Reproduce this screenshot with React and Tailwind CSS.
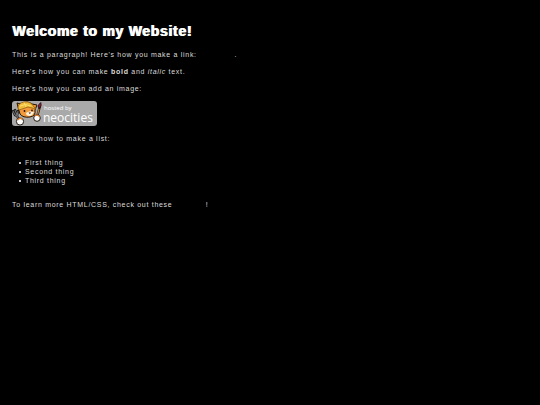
import React from 'react';

const things = ['First thing', 'Second thing', 'Third thing'];

function NeocitiesBadge() {
  return (
    <svg width="85" height="25" viewBox="0 0 85 25" role="img" aria-label="Hosted by Neocities">
      <rect x="0" y="0" width="85" height="25" rx="3" fill="#a9a9a9" />

      {/* fork */}
      <path d="M1 10 L3 14 L5 15 L8 21 M3 9 L5 14 M6 10 L5 15" fill="none" stroke="#1c1c1c" strokeWidth="2.4" strokeLinecap="round" />
      <path d="M1 10 L3 14 L5 15 L8 21 M3 9 L5 14 M6 10 L5 15" fill="none" stroke="#858585" strokeWidth="0.9" />

      {/* brush */}
      <path d="M28 5 L25 16" stroke="#2a1a12" strokeWidth="2.4" strokeLinecap="round" />
      <path d="M27 8 L25 16" stroke="#c08a45" strokeWidth="1.2" />
      <path d="M28.8 1.5 Q30 4 28 7 L26 6 Q26.5 3 28.8 1.5Z" fill="#8c1f35" stroke="#2b1016" strokeWidth="0.8" />

      {/* head */}
      <path d="M6 6 L5 2 L9 3 Q15 -1 20 3 L25 4 L23 9 Q24 15 18 16 Q11 17 8 13Z" fill="#f09a3c" stroke="#241505" strokeWidth="1" strokeLinejoin="round" />
      <path d="M6 7 Q6 2 12 1 Q19 0 22 6 L24 8 L16 6 L7 9Z" fill="#f0bc3a" stroke="#8a540f" strokeWidth="0.7" />
      <path d="M8 5 Q13 2 19 5 M12 1.5 L14 6" fill="none" stroke="#fbe06c" strokeWidth="1" />
      <path d="M14 12 Q18 9 22 11 Q21 14 18 15 Q14 15 14 12Z" fill="#fff1da" />
      <circle cx="12.5" cy="10" r="0.9" fill="#21150d" />
      <circle cx="20" cy="9.5" r="0.9" fill="#21150d" />
      <path d="M16.5 11.5 H19 L17.8 13Z" fill="#38160f" />

      {/* paws */}
      <circle cx="8" cy="20.5" r="3.6" fill="#fff" stroke="#24180d" strokeWidth="1" />
      <path d="M5.5 19 Q8 16 10.5 18.5" fill="none" stroke="#df7e24" strokeWidth="1.5" />
      <circle cx="25" cy="17" r="3.3" fill="#fff" stroke="#24180d" strokeWidth="1" />
      <path d="M23 15 Q25 13 27.5 15.5" fill="none" stroke="#df7e24" strokeWidth="1.3" />

      <text x="32" y="9" fontSize="6" fill="#fff" className="font-['Open_Sans',sans-serif] tracking-normal">hosted by</text>
      <text x="31" y="21" fontSize="12" fill="#fff" className="font-['Open_Sans',sans-serif] tracking-normal">neocities</text>
    </svg>
  );
}

export default function App() {
  return (
    <main className="min-h-screen bg-black px-3 pt-[23px] pb-6 text-[7px] leading-[9px] tracking-widest text-[#dcdcdc] font-['Liberation_Sans',Arial,sans-serif]">
      <h1 className="mb-[11px] text-sm leading-4 font-black tracking-wider text-white [text-shadow:1px_0_0_white]">
        Welcome to my Website!
      </h1>

      <div className="flex flex-col items-start gap-2">
        <p>
          This is a paragraph! Here's how you make a link: <a href="https://neocities.org" className="text-black">Neocities</a>.
        </p>
        <p>
          Here's how you can make <strong>bold</strong> and <em>italic</em> text.
        </p>
        <p>Here's how you can add an image:</p>
        <NeocitiesBadge />
        <p>Here's how to make a list:</p>
      </div>

      <ul className="my-[15px] pl-[7px]">
        {things.map((thing) => (
          <li key={thing} className="flex items-center gap-1">
            <span className="size-[2px] rounded-full bg-white" />
            {thing}
          </li>
        ))}
      </ul>

      <p>
        To learn more HTML/CSS, check out these <a href="https://neocities.org/tutorials" className="text-black">tutorials</a>!
      </p>
    </main>
  );
}
